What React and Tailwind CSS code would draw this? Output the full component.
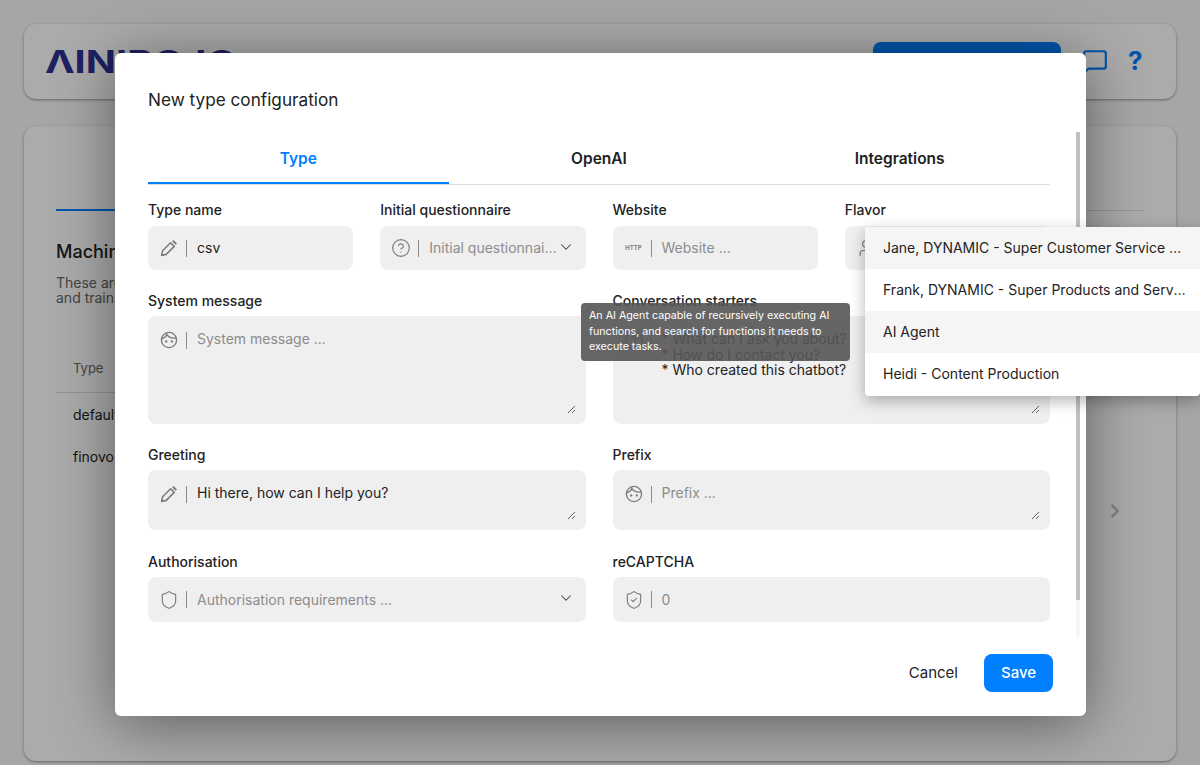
import { ChevronDown, ChevronRight, CircleHelp, MessageSquare, Shield, ShieldCheck, User } from 'lucide-react';

const PencilIcon = () => (
  <svg width="18" height="18" viewBox="0 0 18 18" fill="none" className="shrink-0">
    <path d="M1.6 16.4 L2.6 11.8 L10.6 3.8 L14.2 7.4 L6.2 15.4 Z" stroke="#7d7d7d" strokeWidth="1.6" strokeLinejoin="round" />
    <path d="M12.2 2.4 L13.6 1 L17 4.4 L15.6 5.8 Z" fill="#7d7d7d" />
  </svg>
);

const FaceIcon = () => (
  <svg width="18" height="18" viewBox="0 0 18 18" fill="none" stroke="#7d7d7d" strokeWidth="1.4" className="shrink-0">
    <circle cx="9" cy="9" r="7.6" />
    <path d="M1.8 7.6 C4 7.2 6 5.6 6.8 3.4 C8.4 6.2 12 7.6 16.2 7" />
    <circle cx="6.2" cy="10.4" r="0.5" fill="#7d7d7d" />
    <circle cx="11.8" cy="10.4" r="0.5" fill="#7d7d7d" />
  </svg>
);

const HttpIcon = () => (
  <span className="w-[18px] shrink-0 text-center text-[6px] font-bold leading-none text-[#808080]">HTTP</span>
);

const HelpIcon = () => <CircleHelp size={20} strokeWidth={1.4} className="-mx-px shrink-0 text-[#7d7d7d]" />;

const Divider = ({ className = '' }) => <span className={`mx-2 h-[17px] w-px shrink-0 bg-[#8c8c8c] ${className}`} />;

const Field = ({ label, children, className = '' }) => (
  <div className={className}>
    <label className="mb-[7px] block h-[17px] text-sm leading-[17px] font-medium text-[#222]">{label}</label>
    {children}
  </div>
);

const InputBox = ({ icon, placeholder, value, select, height = 'h-11' }) => (
  <div className={`flex ${height} items-center rounded-lg bg-[#efefef] pr-[11px] pl-3`}>
    {icon}
    <Divider />
    <input
      readOnly
      value={value}
      placeholder={placeholder}
      className="ml-[2px] w-0 min-w-0 flex-1 bg-transparent text-sm text-ellipsis text-[#222] outline-none placeholder:text-[#8c8c8c]"
    />
    {select && <ChevronDown size={18} strokeWidth={1.4} className="mb-[3px] -ml-[3px] shrink-0 text-[#444]" />}
  </div>
);

const AreaBox = ({ icon, placeholder, value, height }) => (
  <div className={`flex ${height} items-start rounded-lg bg-[#efefef] pt-[15px] pr-[10px] pb-[10px] pl-3`}>
    {icon}
    <Divider className="mt-[1px]" />
    <textarea
      readOnly
      value={value}
      placeholder={placeholder}
      className="ml-[2px] h-full min-w-0 flex-1 resize-y bg-transparent text-sm leading-[15.5px] text-[#222] outline-none placeholder:text-[#8c8c8c]"
    />
  </div>
);

const flavors = [
  { name: 'Jane, DYNAMIC - Super Customer Service Representative', active: true },
  { name: 'Frank, DYNAMIC - Super Products and Services Agent' },
  { name: 'AI Agent', active: true },
  { name: 'Heidi - Content Production' },
];

const Background = () => (
  <div className="flex h-full flex-col gap-[27px] px-6 pt-6 pb-1">
    {/* Top bar */}
    <header className="flex h-[75px] shrink-0 items-center rounded-xl bg-white pr-[34px] pl-[21px] shadow-[0_1px_3px_rgba(0,0,0,0.4)]">
      <span className="origin-left scale-x-[1.28] text-[31px] leading-none font-bold text-[#2d3192]">ΛINIRO.IO</span>
      <div className="mb-[1px] ml-auto flex items-center">
        <button className="h-[38px] w-[188px] rounded-lg bg-[#007fff]" />
        <MessageSquare size={26} strokeWidth={2} className="ml-[21px] text-[#007fff]" />
        <span className="ml-[20px] w-[14px] text-[26px] leading-none font-bold text-[#007fff]">?</span>
      </div>
    </header>

    {/* Main card */}
    <main className="min-h-0 flex-1 rounded-xl bg-white px-8 pt-[83px] shadow-[0_1px_3px_rgba(0,0,0,0.4)]">
      <div className="flex items-end">
        <div className="h-[2px] w-[300px] bg-[#007fff]" />
        <div className="h-px flex-1 bg-[#ddd]" />
      </div>
      <h2 className="mt-[30px] text-lg leading-[22px] font-medium text-[#222]">Machine learning types</h2>
      <p className="mt-[12px] text-sm leading-[15px] text-[#666]">
        These are your machine learning types
        <br />
        and training data
      </p>
      <div className="mt-[55px] border-b border-[#ddd] pb-[16px] pl-[17px] text-[13px] leading-4 text-[#666]">Type</div>
      <div className="flex h-[44px] items-center pl-[17px] text-sm text-[#222]">default</div>
      <div className="flex h-[40px] items-center pl-[17px] text-sm text-[#222]">finovo</div>
      <div className="mt-[23px] flex justify-end pr-[18px]">
        <ChevronRight size={22} strokeWidth={2.5} className="text-[#bbb]" />
      </div>
    </main>
  </div>
);

export default function App() {
  return (
    <div className="relative h-screen w-full overflow-hidden bg-[#f8f8f8] font-['Inter',sans-serif]">
      <Background />

      {/* Overlay */}
      <div className="absolute inset-0 bg-black/[.33]" />

      {/* Modal */}
      <div className="absolute top-[53px] left-[115px] flex h-[663px] w-[971px] flex-col rounded-md bg-white pt-[35px] pr-[36px] pl-[33px] shadow-[0_8px_60px_rgba(0,0,0,0.45)]">
        <h1 className="mb-[22px] h-6 text-[17.2px] leading-6 text-[#222]">New type configuration</h1>

        <div className="flex border-b border-[#ddd]">
          <div className="-mb-px flex h-[50px] flex-1 items-center justify-center border-b-2 border-[#007fff] pt-[2px] text-[15.5px] font-semibold text-[#007fff]">Type</div>
          <div className="flex h-[50px] flex-1 items-center justify-center text-[15.5px] font-semibold text-[#222]">OpenAI</div>
          <div className="flex h-[50px] flex-1 items-center justify-center text-[15.5px] font-semibold text-[#222]">Integrations</div>
        </div>

        <div className="mt-[16px] grid grid-cols-4 gap-x-[27px] [&>div:nth-child(-n+4)>label]:mb-[8px]">
          <Field label="Type name">
            <InputBox icon={<PencilIcon />} value="csv" />
          </Field>
          <Field label="Initial questionnaire">
            <InputBox icon={<HelpIcon />} placeholder="Initial questionnaire ..." select />
          </Field>
          <Field label="Website">
            <InputBox icon={<HttpIcon />} placeholder="Website ..." />
          </Field>
          <Field label="Flavor">
            <InputBox icon={<User size={20} strokeWidth={1.4} className="-mx-px shrink-0 text-[#7d7d7d]" />} placeholder="Flavor ..." />
          </Field>

          <Field label="System message" className="col-span-2 mt-[22px]">
            <AreaBox icon={<FaceIcon />} placeholder="System message ..." height="h-[108px]" />
          </Field>
          <Field label="Conversation starters" className="col-span-2 mt-[22px]">
            <AreaBox
              icon={<HelpIcon />}
              value={'* What can I ask you about?\n* How do I contact you?\n* Who created this chatbot?'}
              height="h-[108px]"
            />
          </Field>

          <Field label="Greeting" className="col-span-2 mt-[22px]">
            <AreaBox icon={<PencilIcon />} value="Hi there, how can I help you?" height="h-[60px]" />
          </Field>
          <Field label="Prefix" className="col-span-2 mt-[22px]">
            <AreaBox icon={<FaceIcon />} placeholder="Prefix ..." height="h-[60px]" />
          </Field>

          <Field label="Authorisation" className="col-span-2 mt-[23px]">
            <InputBox icon={<Shield size={20} strokeWidth={1.4} className="-mx-px shrink-0 text-[#7d7d7d]" />} placeholder="Authorisation requirements ..." select height="h-[45px]" />
          </Field>
          <Field label="reCAPTCHA" className="col-span-2 mt-[23px]">
            <InputBox icon={<ShieldCheck size={20} strokeWidth={1.4} className="-mx-px shrink-0 text-[#7d7d7d]" />} placeholder="0" height="h-[45px]" />
          </Field>
        </div>

        <div className="mt-[32px] -mr-[3px] flex items-center justify-end">
          <button className="mr-[26px] text-[15px] text-[#222]">Cancel</button>
          <button className="h-[38px] w-[69px] rounded-lg bg-[#007fff] text-[15px] font-medium text-white">Save</button>
        </div>

        {/* Scrollbar */}
        <div className="absolute top-[79px] right-[6px] h-[505px] w-1 bg-[#f5f5f5]">
          <div className="h-[468px] w-1 bg-[#c0c0c0]" />
        </div>
      </div>

      {/* Tooltip */}
      <div className="absolute top-[303px] left-[581px] h-[58px] w-[269px] rounded bg-[#555]/90 px-2 pt-[5px] text-[10.7px] leading-[15.5px] text-white">
        An AI Agent capable of recursively executing AI functions, and search for functions it needs to execute tasks.
      </div>

      {/* Flavor dropdown */}
      <ul className="absolute top-[227px] left-[865px] w-[335px] rounded bg-white pb-px shadow-[0_5px_15px_rgba(0,0,0,0.3)]">
        {flavors.map((f) => (
          <li key={f.name} className={`flex h-[42px] items-center pr-[14px] pl-[18px] text-sm text-[#222] ${f.active ? 'bg-[#f5f5f5]' : ''}`}>
            <span className="truncate">{f.name}</span>
          </li>
        ))}
      </ul>
    </div>
  );
}
